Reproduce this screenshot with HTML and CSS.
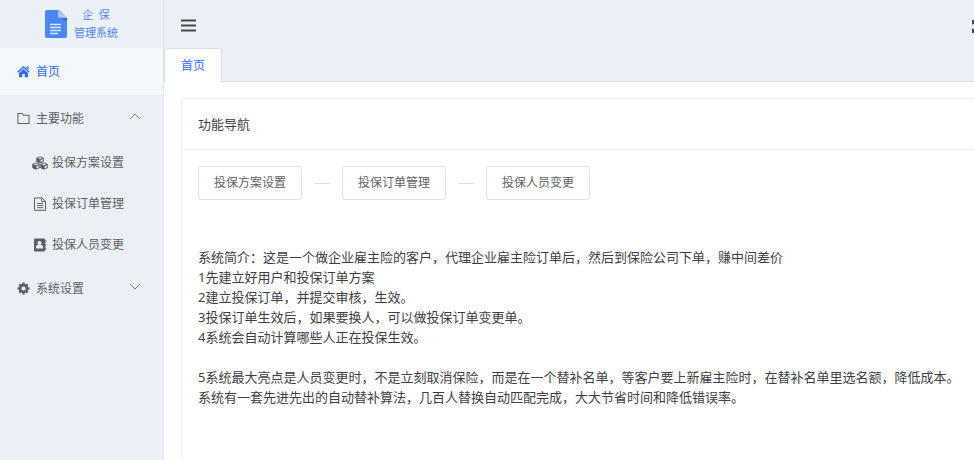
FILE: index.html
```html
<!DOCTYPE html>
<html lang="zh-CN">
<head>
<meta charset="utf-8">
<title>企保管理系统</title>
<link rel="stylesheet" href="styles.css">
</head>
<body>
<div class="app">
  <aside class="sidebar">
    <div class="brand">
      <svg class="brand-icon" viewBox="0 0 22 30" aria-hidden="true">
        <path fill="#4a87f6" d="M2 1h12l8 8v18a2 2 0 0 1-2 2H2a2 2 0 0 1-2-2V3a2 2 0 0 1 2-2z"/>
        <path fill="#a9caff" d="M13 1l9 8h-7a2 2 0 0 1-2-2z"/>
        <path fill="#2d68d8" d="M15 9h7v3z"/>
        <path stroke="#d7e6ff" stroke-width="1.3" d="M5 15.500h11M5 18.500h11M5 21.500h11M5 24.500h8"/>
      </svg>
      <div class="brand-name"><span>企&nbsp; 保</span><span>管理系统</span></div>
    </div>
    <nav class="menu">
      <a class="item active" href="#">
        <svg class="icon" viewBox="0 0 14 14" aria-hidden="true"><path fill="currentColor" d="M7 1.200L13.800 7.200l-1 1.100L7 3.200 1.200 8.300l-1-1.100zM10.200 1.500h2.200v3.800l-2.200-2zM7 4.300l4.900 4.300V13.200H8.400V9.600H5.600v3.600H2.100V8.600z"/></svg>
        <span>首页</span>
      </a>
      <button class="item" type="button" aria-expanded="true">
        <svg class="icon" viewBox="0 0 14 14" aria-hidden="true"><path fill="none" stroke="currentColor" stroke-width="1.100" d="M1 1.500h4.500l1.500 2h5.500q.5 0 .5.500v8q0 .5-.5.500h-11q-.5 0-.5-.5z"/></svg>
        <span>主要功能</span>
        <svg class="arrow" viewBox="0 0 12 8" aria-hidden="true"><path d="M1 6l5-5 5 5"/></svg>
      </button>
      <div class="submenu">
        <a class="item sub" href="#">
          <svg class="icon wide" viewBox="0 0 16 14" aria-hidden="true">
            <g fill="currentColor" stroke="currentColor" stroke-width=".8" stroke-linejoin="round"><path d="M8 .7l3.300 1.300v3.700L8 7.100 4.700 5.700V2z"/><path d="M4 6.900l3.300 1.300v3.700L4 13.300.7 11.900V8.200z"/><path d="M12 6.900l3.300 1.300v3.700L12 13.300l-3.300-1.400V8.200z"/></g>
            <path fill="#ebf0f7" d="M8 1.200l2.200.9L8 3l-2.200-.9zM4 7.400l2.200.9L4 9.200l-2.200-.9zM12 7.400l2.200.9-2.200.9-2.200-.9zM8.600 4l2.100-.9v2.100l-2.100.9zM4.600 10.200l2.100-.9v2.200l-2.100.9zM12.600 10.200l2.100-.9v2.200l-2.100.9z"/>
          </svg>
          <span>投保方案设置</span>
        </a>
        <a class="item sub" href="#">
          <svg class="icon wide" viewBox="0 0 16 14" aria-hidden="true"><path fill="none" stroke="currentColor" stroke-width="1" d="M2.500 .9h7.500l3.500 3.400v9h-11zM9.700 1v3.500h3.700M5.200 6.500h6M5.200 8.600h6M5.200 10.700h6"/></svg>
          <span>投保订单管理</span>
        </a>
        <a class="item sub" href="#">
          <svg class="icon wide" viewBox="0 0 16 14" aria-hidden="true"><path fill="currentColor" d="M3 .5h9q1 0 1 1v11q0 1-1 1H3q-1 0-1-1v-11q0-1 1-1zM13.300 2h.9v2.500h-.9zM13.300 5.700h.9v2.500h-.9zM13.300 9.400h.9v2.500h-.9z"/><circle cx="7.500" cy="5" r="2" fill="#ebf0f7"/><path fill="#ebf0f7" d="M4 10.500V9q0-2 2-2.300l1.500.6 1.500-.6q2 .3 2 2.300v1.500z"/></svg>
          <span>投保人员变更</span>
        </a>
      </div>
      <button class="item" type="button" aria-expanded="false">
        <svg class="icon" viewBox="0 0 14 14" aria-hidden="true"><circle cx="7" cy="7" r="3.600" fill="none" stroke="currentColor" stroke-width="2.800"/><path stroke="currentColor" stroke-width="2.600" d="M7 .6v2M7 11.400v2M.6 7h2M11.400 7h2M2.500 2.500l1.500 1.500M10 10l1.500 1.500M2.500 11.500l1.500-1.500M10 4l1.500-1.500"/></svg>
        <span>系统设置</span>
        <svg class="arrow" viewBox="0 0 12 8" aria-hidden="true"><path d="M1 1l5 5 5-5"/></svg>
      </button>
    </nav>
  </aside>
  <div class="main">
    <header class="topbar">
      <button class="tool" type="button" aria-label="折叠菜单">
        <svg class="bars" viewBox="0 0 15 13" aria-hidden="true"><path stroke="currentColor" stroke-width="2.200" d="M0 1.500h15M0 6.500h15M0 11.500h15"/></svg>
      </button>
      <button class="tool" type="button" aria-label="全屏">
        <svg class="full" viewBox="0 0 14 14" aria-hidden="true"><path fill="currentColor" d="M0 1h5L3.700 2.300l3.300 3.300 3.300-3.300L9 1h5v5l-1.300-1.300L9.400 7l3.300 3.300L14 9v5H9l1.300-1.300L7 9.400l-3.300 3.300L5 14H0V9l1.300 1.300L4.600 7 1.300 4.700 0 6z"/></svg>
      </button>
    </header>
    <div class="tabs"><a class="tab" href="#">首页</a></div>
    <main class="content">
      <section class="card">
        <h1 class="card-title">功能导航</h1>
        <div class="card-body">
          <div class="steps">
            <button class="step" type="button">投保方案设置</button>
            <span class="dash"></span>
            <button class="step" type="button">投保订单管理</button>
            <span class="dash"></span>
            <button class="step" type="button">投保人员变更</button>
          </div>
          <div class="intro">
            <p>系统简介：这是一个做企业雇主险的客户，代理企业雇主险订单后，然后到保险公司下单，赚中间差价</p>
            <p>1先建立好用户和投保订单方案</p>
            <p>2建立投保订单，并提交审核，生效。</p>
            <p>3投保订单生效后，如果要换人，可以做投保订单变更单。</p>
            <p>4系统会自动计算哪些人正在投保生效。</p>
            <p class="spaced">5系统最大亮点是人员变更时，不是立刻取消保险，而是在一个替补名单，等客户要上新雇主险时，在替补名单里选名额，降低成本。</p>
            <p>系统有一套先进先出的自动替补算法，几百人替换自动匹配完成，大大节省时间和降低错误率。</p>
          </div>
        </div>
      </section>
    </main>
  </div>
</div>
</body>
</html>
```
FILE: styles.css
```css
* {
  box-sizing: border-box;
}

body {
  margin: 0;
  overflow-x: hidden;
  background: #fff;
  color: #3c3e42;
  font: 12px/20px "Noto Sans", "Noto Sans CJK SC", sans-serif;
}

button {
  margin: 0;
  padding: 0;
  border: 0;
  background: none;
  color: inherit;
  font: inherit;
  cursor: pointer;
}

a {
  color: inherit;
  text-decoration: none;
}

svg {
  display: block;
  flex: none;
}

.app {
  display: flex;
  min-height: 100vh;
}

.sidebar {
  flex: none;
  width: 164px;
  border-right: 1px solid #dde5f2;
  background: #ebf0f7;
  color: #5c5f64;
}

.brand {
  display: flex;
  align-items: center;
  justify-content: center;
  gap: 7px;
  height: 48px;
  color: #4a87f6;
}

.brand-icon {
  width: 22px;
  height: 30px;
}

.brand-name {
  display: flex;
  flex-direction: column;
  align-items: center;
  font-size: 11px;
  line-height: 18px;
}

.menu,
.submenu {
  display: flex;
  flex-direction: column;
}

.item {
  display: flex;
  align-items: center;
  gap: 6px;
  height: 47px;
  padding: 0 22px 0 17px;
  text-align: left;
}

.active {
  background: #f4f8fb;
  color: #2f6bff;
}

.sub {
  height: 41px;
  padding-left: 32px;
  gap: 4px;
}

.icon {
  width: 13px;
  height: 13px;
}

.wide {
  width: 16px;
  height: 14px;
}

.arrow {
  width: 12px;
  height: 8px;
  margin: 0 0 4px auto;
  fill: none;
  stroke: #777b80;
}

.main {
  display: flex;
  flex: 1;
  flex-direction: column;
  min-width: 0;
}

.topbar {
  display: flex;
  align-items: center;
  justify-content: space-between;
  height: 48px;
  margin-right: -12px;
  padding: 3px 0 0 17px;
  background: #ebf0f7;
  color: #45484d;
}

.bars {
  width: 15px;
  height: 13px;
}

.full {
  width: 14px;
  height: 14px;
}

.tabs {
  display: flex;
  height: 34px;
  border-bottom: 1px solid #d8e1ec;
  background: #ebf0f7;
}

.tab {
  height: 34px;
  padding: 0 16px;
  border: 1px solid #d8e1ec;
  border-bottom: 0;
  border-radius: 3px 3px 0 0;
  background: #fff;
  color: #2f6bff;
  line-height: 34px;
}

.content {
  display: flex;
  flex: 1;
  flex-direction: column;
  padding: 16px 0 0 17px;
}

.card {
  flex: 1;
  margin-right: -16px;
  border: 1px solid #ebeef5;
  border-width: 1px 1px 0;
  border-radius: 4px 4px 0 0;
}

.card-title {
  margin: 0;
  padding: 15px 16px;
  border-bottom: 1px solid #ebeef5;
  font-size: 13px;
  font-weight: 400;
  line-height: 20px;
}

.card-body {
  padding: 16px;
}

.steps {
  display: flex;
  align-items: center;
  gap: 12px;
}

.step {
  height: 34px;
  padding: 0 15px;
  border: 1px solid #dfe2ea;
  border-radius: 3px;
  color: #5c5f64;
}

.dash {
  width: 16px;
  height: 1px;
  background: #dcdfe6;
}

.intro {
  padding-top: 47px;
  font-size: 13px;
}

.intro p {
  margin: 0;
  white-space: nowrap;
}

.intro .spaced {
  margin-top: 20px;
}
```
